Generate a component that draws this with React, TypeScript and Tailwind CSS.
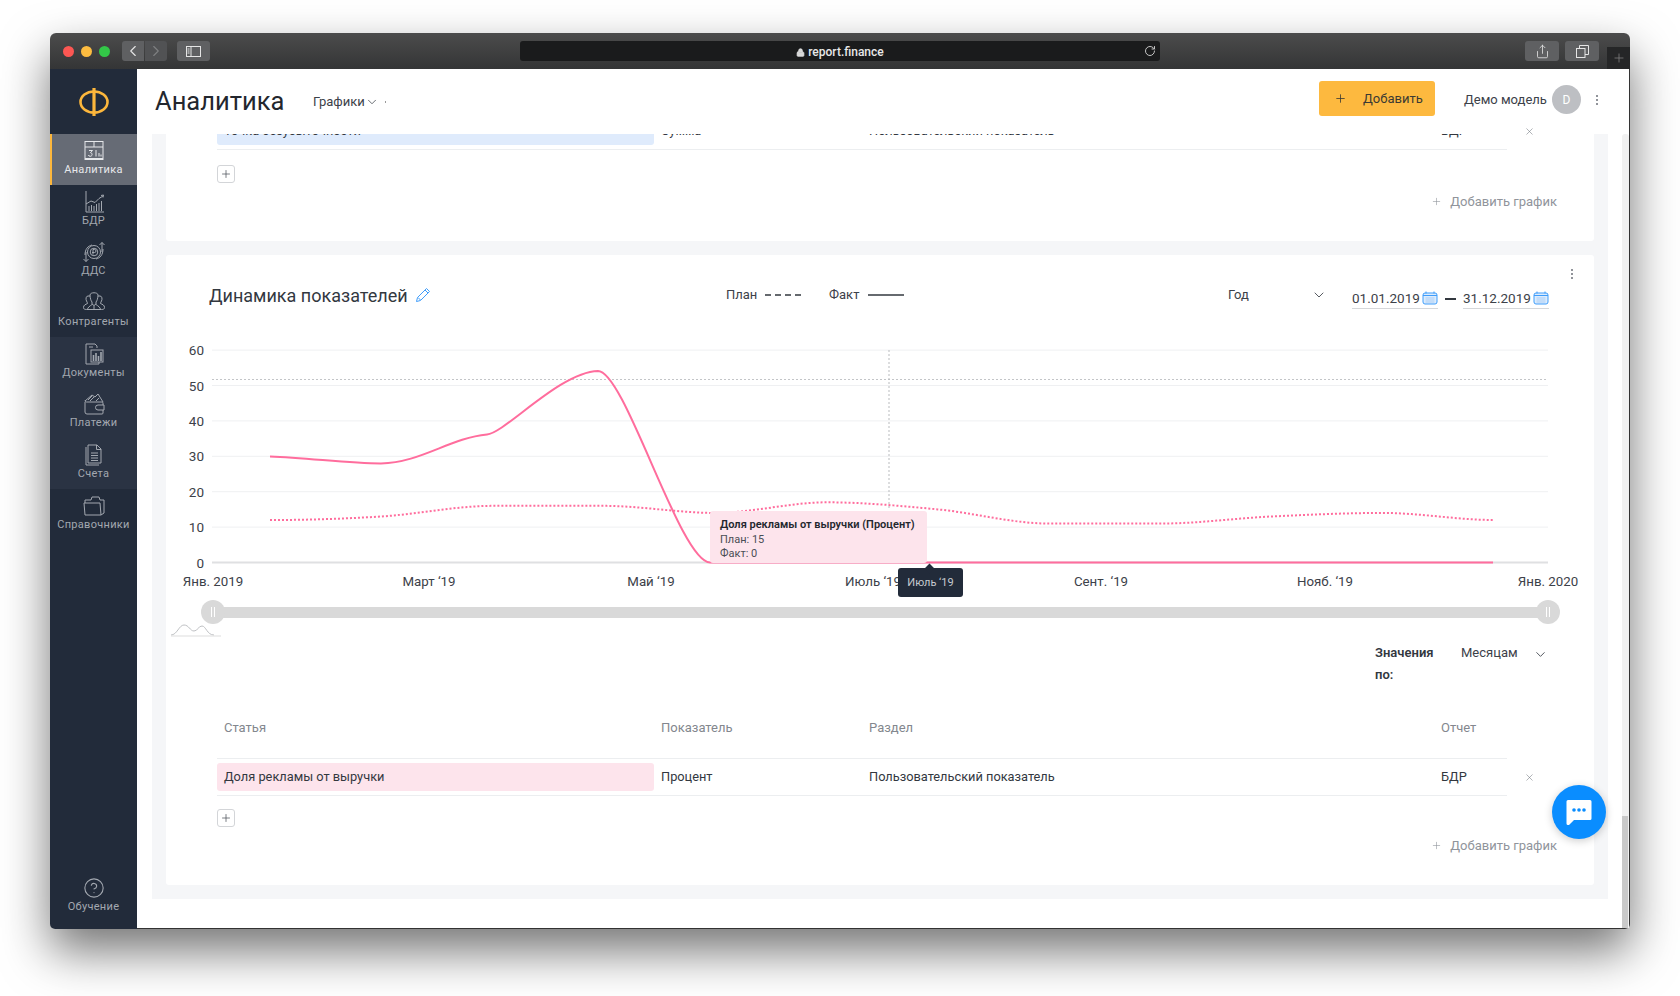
import { ChevronDown, ChevronLeft, ChevronRight, CircleHelp, Lock, Plus, RotateCw, Share, X } from "lucide-react";

const ChartIcon = () => (
  <svg width="24" height="24" viewBox="0 0 24 24" fill="none" stroke="currentColor" strokeWidth="1">
    <rect x="3" y="2.5" width="18" height="18" />
    <path d="M3 8h18M12 2.5V8M3 19.5h18" />
    <path d="M7 11.5h3.5l-2 2.2c2 0 2.2 3.6-.2 3.6-1 0-1.8-.5-2-1.3M14 11v6.5M17 14v3.5M19 15.5v2" />
  </svg>
);

const BdrIcon = () => (
  <svg width="24" height="24" viewBox="0 0 24 24" fill="none" stroke="currentColor" strokeWidth="1">
    <path d="M4 1v21h18" />
    <path d="M4 14l5-3 4 1.5 4-4 4-2.5M19 5.5l2.500-.5-.5 2.500" />
    <path d="M7 21v-5M9.500 21v-6M12 21v-5M14.500 21v-7M17 21v-8M19.500 21v-10" />
  </svg>
);

const CashIcon = () => (
  <svg width="24" height="24" viewBox="0 0 24 24" fill="none" stroke="currentColor" strokeWidth="1">
    <circle cx="12" cy="12" r="6.500" />
    <circle cx="12" cy="12" r="3.800" />
    <path d="M11 14.500v-5h1.500a1.500 1.500 0 0 1 0 3H10" />
    <path d="M20 12V2.500M17.500 5L20 2.500 22.500 5M21 9c0 6-3 9-7 10M4 12v9.500M1.500 19L4 21.500 6.500 19M3 15c0-6 3-9 7-10" />
  </svg>
);

const PeopleIcon = () => (
  <svg width="24" height="24" viewBox="0 0 24 24" fill="none" stroke="currentColor" strokeWidth="1">
    <path d="M8 4c0-3 8-3 8 0 0 3-1 6-2 7v2l-2 1.500-2-1.500v-2C9 10 8 7 8 4z" />
    <path d="M8 5H6c-2 0-2.500 3-1.500 5 .5 1 1 1.500 1 2.500-2 1-4 1.500-4 4 0 1.500 1 2 3 2h15c2 0 3-.5 3-2 0-2.500-2-3-4-4 0-1 .5-1.500 1-2.500 1-2 .5-5-1.500-5h-2" />
    <path d="M5.500 18.500c0-2 2.500-3.500 4.500-5M18.500 18.500c0-2-2.500-3.500-4.500-5M12 14.500v4" />
  </svg>
);

const DocsIcon = () => (
  <svg width="24" height="24" viewBox="0 0 24 24" fill="none" stroke="currentColor" strokeWidth="1">
    <path d="M4 2h9l2 2v2M4 2v20h13v-2" />
    <rect x="9" y="8" width="12" height="12" />
    <path d="M11.500 19v-6M14 19v-8M16.500 19v-5M19 19v-9" strokeWidth="1.600" />
    <path d="M7 5h4" />
  </svg>
);

const WalletIcon = () => (
  <svg width="24" height="24" viewBox="0 0 24 24" fill="none" stroke="currentColor" strokeWidth="1">
    <path d="M3 10v10a2 2 0 0 0 2 2h15a1 1 0 0 0 1-1v-3M21 13v-2a1 1 0 0 0-1-1H4.500A1.500 1.500 0 0 1 3 8.500" />
    <path d="M16 13h6v5h-6a2.500 2.500 0 0 1 0-5z" />
    <path d="M3 9l7-6 3 2 3-3 5 8M6 8l4-4M8 9l4-4M14 9l3-3" />
  </svg>
);

const InvoiceIcon = () => (
  <svg width="24" height="24" viewBox="0 0 24 24" fill="none" stroke="currentColor" strokeWidth="1">
    <path d="M4 4v18h13" />
    <path d="M6 2h9l4 4v14H6z" />
    <path d="M14.500 2v4.500H19M9 10h7M9 12.500h7M9 15h7M9 17.500h7" />
  </svg>
);

const FolderIcon = () => (
  <svg width="24" height="24" viewBox="0 0 24 24" fill="none" stroke="currentColor" strokeWidth="1">
    <path d="M2 9h16l1 12H3z" />
    <path d="M3 9V6h6l1-3h7l1 3h4v13l-3 2" />
  </svg>
);

const navItems = [
  { label: "Аналитика", icon: <ChartIcon />, active: true },
  { label: "БДР", icon: <BdrIcon /> },
  { label: "ДДС", icon: <CashIcon /> },
  { label: "Контрагенты", icon: <PeopleIcon /> },
  { label: "Документы", icon: <DocsIcon />, light: true },
  { label: "Платежи", icon: <WalletIcon />, light: true },
  { label: "Счета", icon: <InvoiceIcon />, light: true },
  { label: "Справочники", icon: <FolderIcon /> },
];

const Sidebar = () => (
  <aside className="flex w-[87px] shrink-0 flex-col rounded-bl-[5px] bg-[#222b3a]">
    <div className="flex h-[65px] items-center justify-center">
      <svg width="32" height="32" viewBox="0 0 32 32" fill="none" stroke="#fdb73c" strokeWidth="2.600">
        <ellipse cx="16" cy="16" rx="13.500" ry="10.500" />
        <path d="M16 2v28" strokeWidth="3.200" />
      </svg>
    </div>
    {navItems.map((item) => (
      <div
        key={item.label}
        className={
          item.active
            ? "flex h-[50.7px] flex-col items-center border-l-2 border-[#fdb73c] bg-[#666b75] pt-[5px] pr-[2px] text-[#e6e8eb]"
            : item.light
              ? "flex h-[50.7px] flex-col items-center bg-[#2a3343] pt-[5px] text-[#a3a8b0]"
              : "flex h-[50.7px] flex-col items-center pt-[5px] text-[#a3a8b0]"
        }
      >
        {item.icon}
        <span className="text-[11px] leading-[13px] tracking-[0.3px]">{item.label}</span>
      </div>
    ))}
    <div className="mt-auto mb-[15px] flex flex-col items-center text-[#a3a8b0]">
      <CircleHelp size={22} strokeWidth={1.200} />
      <span className="mt-[1px] text-[11px] leading-[14px] tracking-[0.3px]">Обучение</span>
    </div>
  </aside>
);

const TitleBar = () => (
  <div className="relative flex h-[36px] shrink-0 items-center rounded-t-[6px] bg-gradient-to-b from-[#4c4c4c] to-[#343536] pl-[13px]">
    <span className="h-[11px] w-[11px] rounded-full bg-[#fc5753]" />
    <span className="ml-[7px] h-[11px] w-[11px] rounded-full bg-[#fdbc40]" />
    <span className="ml-[7px] h-[11px] w-[11px] rounded-full bg-[#33c748]" />
    <div className="ml-[12px] flex h-[20px] w-[22px] items-center justify-center rounded-l-[3px] bg-[#5f6062] text-[#e5e5e5]">
      <ChevronLeft size={18} strokeWidth={1.500} />
    </div>
    <div className="ml-[1px] flex h-[20px] w-[22px] items-center justify-center rounded-r-[3px] bg-[#515254] text-[#7f8082]">
      <ChevronRight size={18} strokeWidth={1.500} />
    </div>
    <div className="ml-[10px] flex h-[20px] w-[33px] items-center justify-center rounded-[3px] bg-[#5f6062]">
      <svg width="15" height="11" viewBox="0 0 15 11" fill="none" stroke="#e5e5e5">
        <rect x="0.500" y="0.500" width="14" height="10" />
        <path d="M5 0.500v10M1.500 3h2M1.500 5h2M1.500 7h2" />
      </svg>
    </div>
    <div className="ml-[310px] flex h-[20px] w-[640px] items-center rounded-[3px] bg-[#1a1b1c]">
      <div className="flex flex-1 translate-y-[1px] items-center justify-center gap-[3px] pl-[16px] text-[12px] font-medium text-[#e8e8e8]">
        <Lock size={9} fill="#d8d8d8" strokeWidth={2} />
        report.finance
      </div>
      <RotateCw size={12} className="mr-[4px] text-[#c4c4c4]" />
    </div>
    <div className="ml-[365px] flex h-[20px] w-[34px] items-center justify-center rounded-[3px] bg-[#5f6062] text-[#e5e5e5]">
      <Share size={15} strokeWidth={1.300} />
    </div>
    <div className="ml-[6px] flex h-[20px] w-[34px] items-center justify-center rounded-[3px] bg-[#5f6062]">
      <svg width="13" height="13" viewBox="0 0 13 13" fill="none" stroke="#e5e5e5">
        <rect x="0.500" y="3.500" width="8.500" height="9" />
        <path d="M3.500 3.500V0.500H12.500V9.500H9" />
      </svg>
    </div>
    <div className="absolute right-0 bottom-0 flex h-[22px] w-[23px] items-center justify-center bg-[#252627] text-[#8a8a8a]">
      <Plus size={14} strokeWidth={1.200} />
    </div>
  </div>
);

const Dots = () => (
  <div className="flex flex-col gap-[2px]">
    <span className="h-[2px] w-[2px] rounded-full bg-[#6c7079]" />
    <span className="h-[2px] w-[2px] rounded-full bg-[#6c7079]" />
    <span className="h-[2px] w-[2px] rounded-full bg-[#6c7079]" />
  </div>
);

const Header = () => (
  <header className="flex h-[65px] shrink-0 items-center pl-[18px] pr-[31px]">
    <h1 className="w-[158px] text-[25.500px] font-normal text-[#23272e]">Аналитика</h1>
    <div className="flex items-center text-[13px] text-[#3c4149]">
      Графики
      <ChevronDown size={14} strokeWidth={1.300} />
      <span className="ml-[6px] h-[2px] w-[1px] bg-[#9a9a9a]" />
    </div>
    <button className="ml-auto flex h-[35px] w-[116px] -translate-y-[3px] items-center rounded-[3px] bg-[#fdb93f] pl-[15px] text-[13px] text-[#3b3a33]">
      <Plus size={13} strokeWidth={1.500} />
      <span className="ml-[16px]">Добавить</span>
    </button>
    <span className="ml-[29px] w-[88px] -translate-y-[2px] whitespace-nowrap text-[13px] text-[#3c4149]">Демо модель</span>
    <div className="flex h-[29px] w-[29px] -translate-y-[2px] items-center justify-center rounded-full bg-[#bdbfc3] text-[12px] text-white">
      D
    </div>
    <div className="ml-[15px] -translate-y-[2px]">
      <Dots />
    </div>
  </header>
);

const Row = ({ name, metric, section, report, nameClass }) => (
  <div className="flex h-[37px] w-[1290px] items-center border-b border-[#eceef0] text-[12.800px] text-[#33383f]">
    <div className={"flex h-[28px] w-[437px] shrink-0 items-center rounded-[3px] pl-[7px] " + nameClass}>{name}</div>
    <div className="w-[215px] shrink-0 pl-[7px]">{metric}</div>
    <div className="w-[572px] shrink-0">{section}</div>
    <div>{report}</div>
    <X size={11} strokeWidth={1.200} className="absolute ml-[1307px] text-[#70757d]" />
  </div>
);

const AddSquare = () => (
  <div className="flex h-[18px] w-[18px] items-center justify-center rounded-[3px] border border-[#d3d5d8] text-[#4f545c]">
    <Plus size={12} strokeWidth={1.500} />
  </div>
);

const AddChart = () => (
  <div className="flex items-center justify-end pr-[37px] text-[13px] text-[#90949b]">
    <Plus size={11} strokeWidth={1.300} />
    <span className="ml-[8px]">Добавить график</span>
  </div>
);

const Calendar = () => (
  <svg width="16" height="14" viewBox="0 0 16 14" fill="#dcecfd" stroke="#3f9dfb">
    <rect x="1" y="2" width="14" height="11" rx="2" />
    <path d="M4 0.500v2M12 0.500v2M1 4.500h14" fill="none" />
    <path d="M3.500 7h9M3.500 9h9M3.500 11h9" stroke="#a9cdf5" />
  </svg>
);

const DateField = ({ value }) => (
  <div className="flex w-[86px] items-center justify-between border-b border-[#d5d7da] pb-[1px] text-[13.500px] leading-[18px] text-[#3c4149]">
    {value}
    <Calendar />
  </div>
);

// monotone curve through the monthly points
const smoothPath = (pts: number[][]) => {
  const slopes = pts.map((p, i) => {
    if (i === 0 || i === pts.length - 1) return 0;
    const a = pts[i - 1];
    const b = pts[i + 1];
    if ((p[1] - a[1]) * (b[1] - p[1]) <= 0) return 0;
    return (b[1] - a[1]) / (b[0] - a[0]);
  });
  let d = `M${pts[0][0]} ${pts[0][1]}`;
  for (let i = 1; i < pts.length; i++) {
    const dx = (pts[i][0] - pts[i - 1][0]) / 3;
    d += ` C${pts[i - 1][0] + dx} ${pts[i - 1][1] + slopes[i - 1] * dx} ${pts[i][0] - dx} ${pts[i][1] - slopes[i] * dx} ${pts[i][0]} ${pts[i][1]}`;
  }
  return d;
};

const yFor = (v: number) => 562.5 - v * 3.54;
const planValues = [12, 13, 16, 16, 14, 17, 15, 11, 11, 13, 14, 12];
const planPath = smoothPath(planValues.map((v, i) => [270 + i * 111.3, yFor(v)]));
const factPath =
  "M270 456.400 C310 458 350 463.500 381 463.400 C420 463 450 438 487 434.500 C505 433 560 372 598 371 C625 371 680 562 710 562.500 L1493 562.500";

const yTicks = [60, 50, 40, 30, 20, 10, 0];
const xTicks = [
  ["Янв. 2019", 213],
  ["Март ‘19", 429],
  ["Май ‘19", 651],
  ["Июль ‘19", 873],
  ["Сент. ‘19", 1101],
  ["Нояб. ‘19", 1325],
  ["Янв. 2020", 1548],
];

const Chart = () => (
  <div className="relative h-[265px]">
    <svg width="1428" height="265" viewBox="166 335 1428 265" className="block">
      {yTicks.map((t) => (
        <g key={t}>
          <line x1="212" x2="1548" y1={yFor(t)} y2={yFor(t)} stroke={t === 0 ? "#dfe0e2" : "#eff0f2"} strokeWidth={t === 0 ? 2 : 1} />
          <text x="204" y={yFor(t) + 5} textAnchor="end" fontSize="13.500" fill="#3c4149">
            {t}
          </text>
        </g>
      ))}
      {xTicks.map(([label, x]) => (
        <text key={label} x={x} y="586" textAnchor="middle" fontSize="13.300" fill="#3c4149">
          {label}
        </text>
      ))}
      <line x1="212" x2="1548" y1="379.500" y2="379.500" stroke="#c3c5c8" strokeDasharray="2 2" />
      <line x1="889" x2="889" y1="350" y2="510" stroke="#b9bbbe" strokeDasharray="2 2" />
      <path d={planPath} fill="none" stroke="#ff6d9d" strokeWidth="2" strokeDasharray="2 2" />
      <path d={factPath} fill="none" stroke="#ff6d9d" strokeWidth="2" />
    </svg>
    <div className="absolute top-[176px] left-[544px] h-[52px] w-[217px] rounded-[3px] bg-[#fde4ec] pt-[7px] pl-[10px] text-[11px] leading-[14.500px] whitespace-nowrap text-[#4a4e55]">
      <div className="font-semibold text-[#23272e]">Доля рекламы от выручки (Процент)</div>
      <div>План: 15</div>
      <div>Факт: 0</div>
    </div>
    <div className="absolute top-[233px] left-[732px] flex h-[29px] w-[65px] items-center justify-center rounded-[3px] bg-[#222b3a] pt-[1px] text-[11px] text-[#c6cad0]">
      <span className="absolute -top-[3px] left-[28px] h-[7px] w-[7px] rotate-45 bg-[#222b3a]" />
      Июль ‘19
    </div>
  </div>
);

const SliderHandle = () => (
  <div className="z-10 flex h-[24px] w-[24px] shrink-0 items-center justify-center gap-[2px] rounded-full bg-[#d9d9d9]">
    <span className="h-[10px] w-[1px] bg-white" />
    <span className="h-[10px] w-[1px] bg-white" />
  </div>
);

const ChartCard = () => (
  <section className="relative flex-1 rounded-[3px] bg-white">
    <div className="absolute top-[14px] right-[21px]">
      <Dots />
    </div>
    <div className="flex h-[40px] items-center pt-[40px] pl-[43px] text-[13px] text-[#3c4149]">
      <h2 className="w-[517px] shrink-0 whitespace-nowrap text-[18px] font-normal text-[#33383f]">
        Динамика показателей
        <svg width="16" height="16" viewBox="0 0 16 16" fill="none" stroke="#3f9dfb" className="ml-[7px] inline-block align-[-1px]">
          <path d="M11.500 1.500l3 3L5.500 13.500l-4 1 1-4zM10 3l3 3M3 10.500l2.500 2.500" />
        </svg>
      </h2>
      <span className="w-[39px] shrink-0">План</span>
      <svg width="36" height="2" className="shrink-0">
        <line x1="0" x2="36" y1="1" y2="1" stroke="#33383f" strokeWidth="1.500" strokeDasharray="6 4" />
      </svg>
      <span className="ml-[28px] w-[39px] shrink-0">Факт</span>
      <svg width="36" height="2" className="shrink-0">
        <line x1="0" x2="36" y1="1" y2="1" stroke="#33383f" strokeWidth="1.500" />
      </svg>
      <span className="ml-[324px] w-[83px] shrink-0">Год</span>
      <ChevronDown size={16} strokeWidth={1.300} className="shrink-0" />
      <div className="ml-[25px] flex shrink-0 translate-y-[4px] items-center">
        <DateField value="01.01.2019" />
        <span className="mx-[7px] h-[1.500px] w-[11px] bg-[#33383f]" />
        <DateField value="31.12.2019" />
      </div>
    </div>
    <div className="pt-[40px]">
      <Chart />
    </div>
    <div className="relative -mt-[1px] flex h-[26px] items-center pl-[35px] pr-[34px]">
      <SliderHandle />
      <div className="-mx-[4px] h-[11px] flex-1 bg-[#d9d9d9]" />
      <SliderHandle />
    </div>
    <svg width="50" height="14" viewBox="0 0 50 14" fill="none" stroke="#bfc1c4" className="-mt-[2px] ml-[5px] block">
      <path d="M0 12c6 0 8-10 13-10s6 6 10 6 4-5 8-5 5 9 12 9" />
      <path d="M0 13h50" stroke="#dddddd" />
    </svg>
    <div className="mt-[5px] flex justify-end pr-[46px] text-[13px] leading-[22px] text-[#3c4149]">
      <div className="w-[86px] font-semibold text-[#33383f]">
        Значения
        <br />
        по:
      </div>
      <div className="w-[72px]">Месяцам</div>
      <ChevronDown size={15} strokeWidth={1.400} className="mt-[5px]" />
    </div>
    <div className="mt-[32px] ml-[51px] flex h-[41px] w-[1290px] items-start border-b border-[#eceef0] text-[13px] text-[#83878e]">
      <span className="w-[444px] shrink-0 pl-[7px]">Статья</span>
      <span className="w-[208px] shrink-0">Показатель</span>
      <span className="w-[572px] shrink-0">Раздел</span>
      <span>Отчет</span>
    </div>
    <div className="ml-[51px]">
      <Row name="Доля рекламы от выручки" metric="Процент" section="Пользовательский показатель" report="БДР" nameClass="bg-[#fde4ec]" />
      <div className="mt-[13px]">
        <AddSquare />
      </div>
    </div>
    <div className="mt-[9px]">
      <AddChart />
    </div>
  </section>
);

const TopCard = () => (
  <section className="h-[107px] shrink-0 overflow-hidden rounded-b-[3px] bg-white pl-[51px]">
    <div className="-mt-[21px]">
      <Row name="Точка безубыточности" metric="Сумма" section="Пользовательский показатель" report="БДР" nameClass="bg-[#dfebfc]" />
    </div>
    <div className="mt-[15px]">
      <AddSquare />
    </div>
    <div className="-ml-[51px] mt-[9px]">
      <AddChart />
    </div>
  </section>
);

const Scrollbar = () => (
  <div className="flex w-[7px] shrink-0 flex-col justify-end rounded-t-[3px] bg-[#f1f1f1]">
    <div className="h-[112px] w-[6px] bg-[#c9c9c9]" />
  </div>
);

export default function App() {
  return (
    <div
      className="h-[996px] w-[1680px] overflow-hidden bg-white pt-[33px] pl-[50px]"
      style={{ fontFamily: 'Roboto, "Noto Sans", sans-serif' }}
    >
      <div className="relative flex h-[896px] w-[1580px] flex-col rounded-[6px] bg-white shadow-[0_22px_48px_rgba(0,0,0,0.55)]">
        <TitleBar />
        <div className="flex min-h-0 flex-1">
          <Sidebar />
          <div className="flex min-w-0 flex-1 flex-col rounded-br-[5px] border-r border-b border-[#333333]">
            <Header />
            <div className="flex min-h-0 flex-1">
              <main className="ml-[15px] flex h-[765px] w-[1456px] flex-col gap-[14px] overflow-hidden bg-[#f5f6f8] px-[14px] pb-[14px]">
                <TopCard />
                <ChartCard />
              </main>
              <div className="ml-auto flex">
                <Scrollbar />
              </div>
            </div>
          </div>
        </div>
        <button className="absolute top-[752px] left-[1502px] flex h-[54px] w-[54px] items-center justify-center rounded-full bg-[#0a8dff] shadow-[0_2px_8px_rgba(0,0,0,0.2)]">
          <svg width="28" height="28" viewBox="0 0 28 28">
            <path d="M3 2h22a1.500 1.500 0 0 1 1.500 1.500v17a1.500 1.500 0 0 1-1.500 1.500H9l-5 5H3a1.500 1.500 0 0 1-1.500-1.500v-22A1.500 1.500 0 0 1 3 2z" fill="white" />
            <circle cx="9" cy="12" r="1.800" fill="#0a8dff" />
            <circle cx="14" cy="12" r="1.800" fill="#0a8dff" />
            <circle cx="19" cy="12" r="1.800" fill="#0a8dff" />
          </svg>
        </button>
      </div>
    </div>
  );
}
